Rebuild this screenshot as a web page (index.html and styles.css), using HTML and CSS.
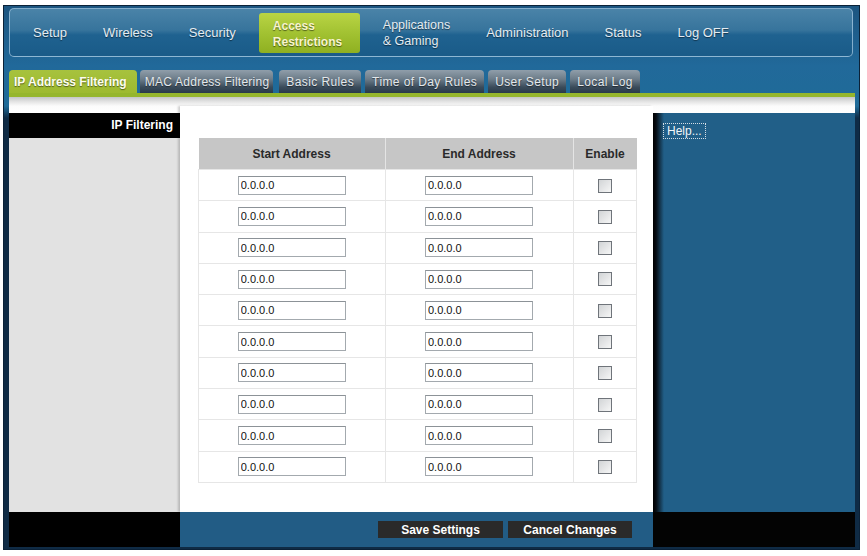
FILE: index.html
```html
<!DOCTYPE html>
<html lang="en">
<head>
    <meta charset="UTF-8">
    <title>Access Restrictions - IP Address Filtering</title>
    <link rel="stylesheet" href="styles.css">
</head>
<body>
    <div class="frame">
        <div class="menu">
            <a class="menu-item">Setup</a>
            <a class="menu-item">Wireless</a>
            <a class="menu-item">Security</a>
            <a class="menu-item current">Access<br>Restrictions</a>
            <a class="menu-item two-line">Applications<br>&amp; Gaming</a>
            <a class="menu-item">Administration</a>
            <a class="menu-item">Status</a>
            <a class="menu-item">Log OFF</a>
        </div>

        <div class="tabs">
            <a class="tab active">IP Address Filtering</a>
            <a class="tab tab-mac">MAC Address Filtering</a>
            <a class="tab">Basic Rules</a>
            <a class="tab">Time of Day Rules</a>
            <a class="tab">User Setup</a>
            <a class="tab">Local Log</a>
        </div>
        <div class="tab-line"></div>
        <div class="strip"></div>

        <div class="main">
            <div class="side">
                <div class="side-title">IP Filtering</div>
            </div>
            <div class="panel">
                <table class="filter">
                    <thead>
                        <tr>
                            <th class="col-start">Start Address</th>
                            <th class="col-end">End Address</th>
                            <th class="col-enable">Enable</th>
                        </tr>
                    </thead>
                    <tbody id="rows">
                        <tr><td><input type="text" value="0.0.0.0"></td><td><input type="text" value="0.0.0.0"></td><td><input type="checkbox"></td></tr>
                        <tr><td><input type="text" value="0.0.0.0"></td><td><input type="text" value="0.0.0.0"></td><td><input type="checkbox"></td></tr>
                        <tr><td><input type="text" value="0.0.0.0"></td><td><input type="text" value="0.0.0.0"></td><td><input type="checkbox"></td></tr>
                        <tr><td><input type="text" value="0.0.0.0"></td><td><input type="text" value="0.0.0.0"></td><td><input type="checkbox"></td></tr>
                        <tr><td><input type="text" value="0.0.0.0"></td><td><input type="text" value="0.0.0.0"></td><td><input type="checkbox"></td></tr>
                        <tr><td><input type="text" value="0.0.0.0"></td><td><input type="text" value="0.0.0.0"></td><td><input type="checkbox"></td></tr>
                        <tr><td><input type="text" value="0.0.0.0"></td><td><input type="text" value="0.0.0.0"></td><td><input type="checkbox"></td></tr>
                        <tr><td><input type="text" value="0.0.0.0"></td><td><input type="text" value="0.0.0.0"></td><td><input type="checkbox"></td></tr>
                        <tr><td><input type="text" value="0.0.0.0"></td><td><input type="text" value="0.0.0.0"></td><td><input type="checkbox"></td></tr>
                        <tr><td><input type="text" value="0.0.0.0"></td><td><input type="text" value="0.0.0.0"></td><td><input type="checkbox"></td></tr>
                    </tbody>
                </table>
            </div>
            <div class="help">
                <a class="help-link">Help...</a>
            </div>
        </div>

        <div class="bottom">
            <div class="bottom-side"></div>
            <div class="bottom-panel">
                <button class="btn">Save Settings</button>
                <button class="btn">Cancel Changes</button>
            </div>
            <div class="bottom-help"></div>
        </div>
    </div>
</body>
</html>
```

FILE: styles.css
```css
body {
    margin: 0;
    background: #fff;
    font-family: "Liberation Sans", Arial, sans-serif;
    font-size: 12px;
}
.frame {
    box-sizing: border-box;
    width: 857px;
    height: 545px;
    margin: 5px 0 0 3px;
    padding: 2px 4px 2px 5px;
    border: 1px solid #0b2137;
    background: linear-gradient(to bottom, #1c5580 0, #21699a 60px, #1f6b98 100px, #0f2b45 112px);
}

/* top menu */
.menu {
    box-sizing: border-box;
    height: 49px;
    margin-right: 2px;
    padding-left: 5px;
    display: flex;
    align-items: center;
    border: 1px solid rgba(165, 200, 225, 0.75);
    border-radius: 5px;
    background: linear-gradient(to bottom, #4a83a8 0%, #37749c 45%, #1f6290 55%, #1a5b88 100%);
}
.menu-item {
    padding: 0 18px;
    color: #e4ecf2;
    font-size: 13px;
    line-height: 16px;
    text-shadow: 0 1px 1px rgba(0, 0, 0, 0.5);
}
.menu-item.two-line {
    font-size: 12.5px;
}
.menu-item.current {
    box-sizing: border-box;
    width: 101px;
    height: 40px;
    margin: 0 5px 0 5px;
    padding: 5px 0 0 14px;
    border-radius: 3px;
    background: linear-gradient(to bottom, #b9d444 0%, #a2c232 50%, #8fb021 100%);
    color: #f8f4cc;
    font-size: 12px;
    font-weight: bold;
}

/* sub tabs */
.tabs {
    display: flex;
    height: 23px;
    margin-top: 13px;
}
.tab {
    margin-right: 4px;
    padding: 0 7px;
    line-height: 24px;
    border-radius: 4px 4px 0 0;
    background: linear-gradient(to bottom, #909eaa 0%, #6c7c89 40%, #3a4b5a 75%, #283a4a 100%);
    color: #e3e8ec;
    letter-spacing: 0.4px;
    text-shadow: 0 1px 1px rgba(0, 0, 0, 0.5);
}
.tab.tab-mac {
    margin-right: 6px;
    padding: 0 4px 0 5px;
    letter-spacing: 0.25px;
}
.tab.active {
    margin-right: 3px;
    padding: 0 10px 0 5px;
    background: linear-gradient(to bottom, #a7c23e 0%, #9dba2f 100%);
    color: #fdfdf0;
    font-weight: bold;
    letter-spacing: 0;
}
.tab-line {
    height: 4px;
    background: #95b62c;
}
.strip {
    height: 16px;
    background: linear-gradient(to bottom, #c4c6c6 0, #e6e6e6 5px, #fbfbfb 9px, #fff 16px);
}

/* main area */
.main {
    display: flex;
    height: 399px;
}
.side {
    width: 171px;
    background: #e2e2e2;
}
.side-title {
    height: 25px;
    padding-right: 7px;
    background: #000;
    color: #fff;
    font-weight: bold;
    line-height: 25px;
    text-align: right;
}
.panel {
    box-sizing: border-box;
    width: 473px;
    margin-top: -7px;
    padding: 32px 0 0 18px;
    background: #fff;
    box-shadow: -2px 0 2px rgba(0, 0, 0, 0.18);
}
.help {
    flex: 1;
    padding: 10px 0 0 10px;
    background: linear-gradient(to right, #000 0, #060c12 3px, #215f88 11px);
}
.help-link {
    display: inline-block;
    padding: 0 3px;
    border: 1px dotted #d4dde5;
    color: #f2f6f9;
    font-size: 12px;
    line-height: 14px;
}

/* table */
.filter {
    width: 439px;
    border-collapse: collapse;
}
.filter th {
    height: 31px;
    padding: 0;
    background: #c6c6c6;
    border-left: 1px solid #e4e4e4;
    color: #2a2a2a;
    font-size: 12px;
}
.filter th:first-child {
    border-left: none;
}
.col-start { width: 186px; }
.col-end { width: 187px; }
.filter td {
    height: 30.3px;
    padding: 0;
    border: 1px solid #e6e6e6;
    text-align: center;
}
.filter input[type="text"] {
    box-sizing: border-box;
    width: 108px;
    height: 19px;
    margin: 0;
    padding: 0 2px;
    border: 1px solid #a3a9ae;
    border-top-color: #8c9297;
    font-family: "Liberation Sans", Arial, sans-serif;
    font-size: 11px;
    color: #111;
    vertical-align: middle;
}
.filter input[type="checkbox"] {
    -webkit-appearance: none;
    appearance: none;
    width: 14px;
    height: 14px;
    margin: 0;
    border: 1px solid #6f747a;
    background: linear-gradient(to bottom right, #d2d4d6, #f6f6f6);
    vertical-align: middle;
}

/* bottom buttons */
.bottom {
    display: flex;
    height: 35px;
}
.bottom-side {
    width: 171px;
    background: #000;
}
.bottom-panel {
    box-sizing: border-box;
    width: 473px;
    display: flex;
    justify-content: flex-end;
    align-items: flex-start;
    gap: 5px;
    padding: 9px 21px 0 0;
    background: #225c85;
}
.bottom-help {
    flex: 1;
    background: #030303;
}
.btn {
    width: 125px;
    height: 17px;
    padding: 0;
    border: none;
    background: #2a2a2a;
    color: #fff;
    font-family: "Liberation Sans", Arial, sans-serif;
    font-size: 12px;
    font-weight: bold;
}
.btn + .btn {
    width: 124px;
}
```
